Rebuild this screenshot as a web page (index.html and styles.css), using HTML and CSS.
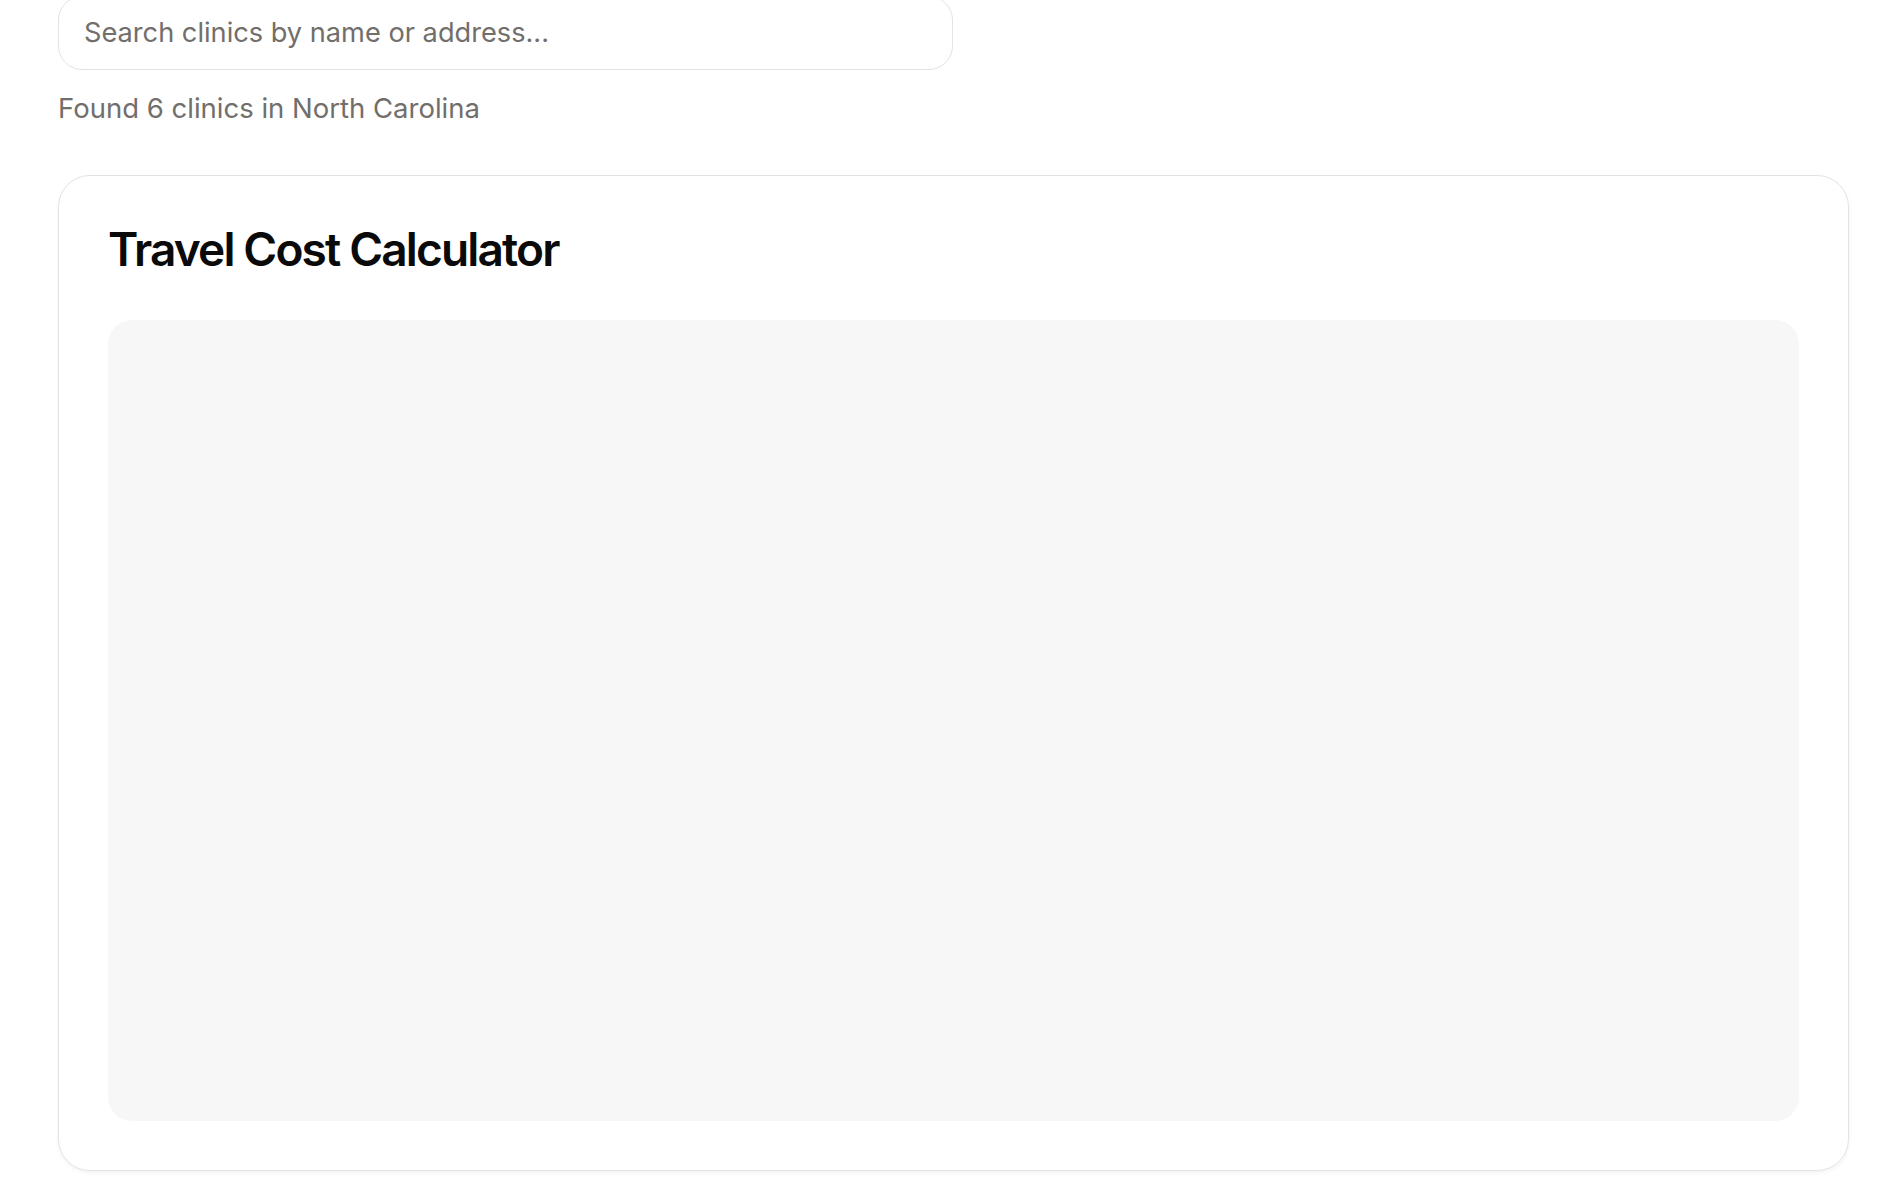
FILE: index.html
```html
<!DOCTYPE html>
<html lang="en">
<head>
<meta charset="utf-8">
<title>Clinics</title>
<link rel="stylesheet" href="styles.css">
</head>
<body>
<main class="page">
  <div class="search">
    <input class="search-input" type="text" placeholder="Search clinics by name or address...">
  </div>
  <p class="results">Found 6 clinics in North Carolina</p>
  <section class="card">
    <h2 class="card-title">Travel Cost Calculator</h2>
    <div class="card-body"></div>
  </section>
</main>
</body>
</html>
```
FILE: styles.css
```css
* { box-sizing: border-box; }
html, body { margin: 0; padding: 0; background: #ffffff; }
body { font-family: Inter, "Noto Sans", "Liberation Sans", sans-serif; color: #0a0a0a; }
.page { padding: 0 55px 40px 58px; }
.search { width: 895px; margin-top: -4px; }
.search-input {
  display: block;
  width: 100%;
  height: 74px;
  padding: 0 24px 2px 25px;
  border: 1.5px solid #e3e3e3;
  border-radius: 24px;
  font-family: inherit;
  font-size: 27.2px;
  color: #0a0a0a;
  background: #fff;
  outline: none;
}
.search-input::placeholder { color: #716e6b; }
.results {
  margin: 22px 0 0 0;
  font-size: 27.5px;
  line-height: 32px;
  color: #716e6b;
}
.card {
  margin-top: 51px;
  border: 1.5px solid #e3e3e3;
  border-radius: 32px;
  padding: 49px;
  height: 996px;
  box-shadow: 0 2px 4px rgba(0,0,0,0.05);
  display: flex;
  flex-direction: column;
}
.card-title {
  margin: 0 0 47px 0;
  font-size: 46px;
  line-height: 48px;
  font-weight: 600;
  letter-spacing: -0.04em;
  color: #0a0a0a;
}
.card-body {
  flex: 1;
  background: #f7f7f7;
  border-radius: 24px;
}
```
